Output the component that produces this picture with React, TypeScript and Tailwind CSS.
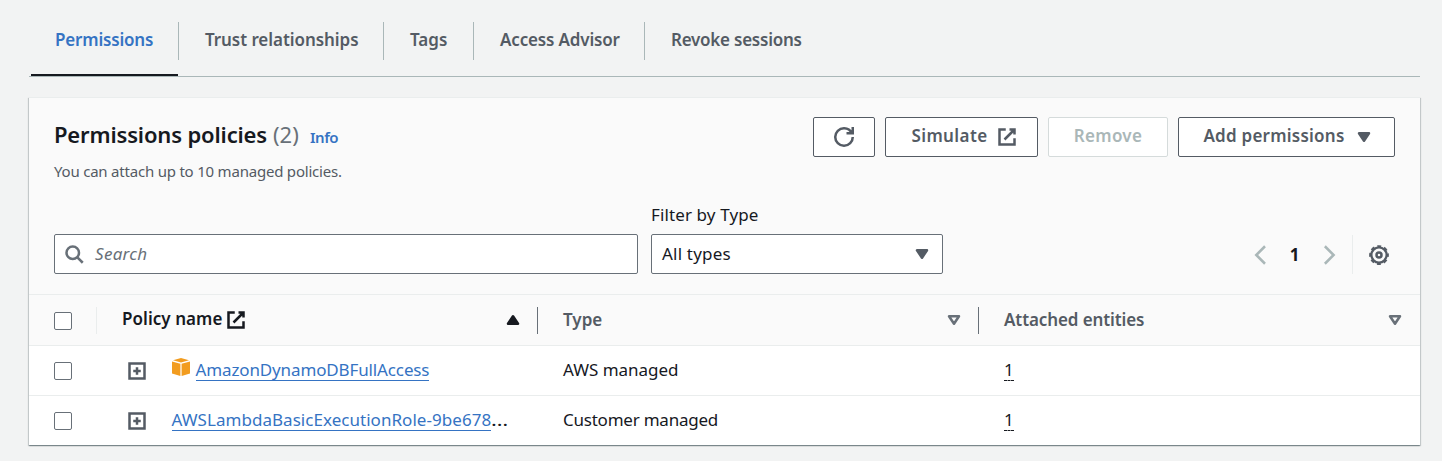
import type { ReactNode } from "react";

function Icon({ children, className = "" }: { children: ReactNode; className?: string }) {
  return (
    <svg
      viewBox="0 0 16 16"
      className={`h-5 w-5 shrink-0 ${className}`}
      fill="none"
      stroke="currentColor"
      strokeWidth="2"
    >
      {children}
    </svg>
  );
}

const External = ({ className = "" }: { className?: string }) => (
  <Icon className={className}>
    <path d="M10 2h4v4M6 10l8-8M14 9.05V14H2V2h5" />
  </Icon>
);

const Caret = ({ kind, className = "" }: { kind: "down" | "up" | "outline"; className?: string }) => (
  <Icon className={className}>
    <path
      d={kind === "up" ? "M12 11H4l4-6 4 6z" : "M4 5h8l-4 6-4-6z"}
      fill={kind === "outline" ? "none" : "currentColor"}
      strokeLinejoin="round"
    />
  </Icon>
);

const Checkbox = () => (
  <span className="block h-[18px] w-[18px] shrink-0 rounded-[2px] border border-[#687078] bg-white" />
);

const Expand = () => (
  <Icon className="text-[#545b64]">
    <path d="M2 2h12v12H2zM8 5v6M5 8h6" />
  </Icon>
);

const Cube = () => (
  <svg viewBox="0 0 18 18" className="h-[18px] w-[18px] shrink-0" fill="#f29c1f">
    <path d="M9 0L17 2.3 9 4.6 1 2.3z" />
    <path d="M0 3.4l8.4 2.4V18L0 15.6z" />
    <path d="M18 3.4L9.6 5.8V18L18 15.6z" />
  </svg>
);

const tabs = [
  { label: "Permissions", box: "w-[147px]", text: "tracking-[-0.18px] text-[#3573c3]" },
  { label: "Trust relationships", box: "w-[205px]", text: "tracking-[-0.06px] text-[#545b64]" },
  { label: "Tags", box: "w-[90px]", text: "text-[#545b64]" },
  { label: "Access Advisor", box: "w-[171px]", text: "tracking-[-0.16px] text-[#545b64]" },
  { label: "Revoke sessions", box: "w-[182px]", text: "tracking-[-0.24px] text-[#545b64]" },
];

const button =
  "flex h-10 shrink-0 items-center justify-center rounded-[2px] border bg-white font-semibold tracking-[0.28px]";

export default function App() {
  return (
    <div className="h-[461px] overflow-hidden whitespace-nowrap bg-[#f2f3f3] pl-[29px] font-['Noto_Sans',sans-serif] text-[17px] leading-6 text-[#16191f]">
      <div className="flex h-[77px] w-[1391px] border-b border-[#aab7b8] pl-[2px]">
        {tabs.map((tab, i) => (
          <div
            key={tab.label}
            className={`flex flex-col justify-between pt-[22px] ${tab.box} ${i === 0 ? "border-b-2 border-[#16191f]" : ""}`}
          >
            <div
              className={`flex h-[38px] items-center font-semibold ${i === 0 ? "pl-6" : "border-l border-[#aab7b8] pl-[26px]"}`}
            >
              <span className={`relative top-[-1px] ${tab.text}`}>{tab.label}</span>
            </div>
          </div>
        ))}
      </div>

      <section className="mt-5 h-[348px] w-[1391px] border-t border-[#eaeded] bg-white shadow-[0_1px_1px_0_rgba(0,28,36,0.3),1px_1px_1px_0_rgba(0,28,36,0.15),-1px_1px_1px_0_rgba(0,28,36,0.15)]">
        <div className="h-[197px] border-b border-[#eaeded] bg-[#fafafa] px-[25px] pt-[19px]">
          <div className="flex h-[77px] justify-between">
            <div>
              <div className="flex items-baseline leading-[35px]">
                <h2 className="w-[219px] text-[22px] font-semibold tracking-[-0.16px]">Permissions policies</h2>
                <span className="w-[37px] text-[22px] text-[#687078]">(2)</span>
                <span className="text-[15px] font-semibold tracking-[-0.45px] text-[#3573c3]">Info</span>
              </div>
              <p className="mt-[4px] text-[15px] tracking-[-0.21px] text-[#545b64]">
                You can attach up to 10 managed policies.
              </p>
            </div>
            <div className="flex gap-[10px] text-[#545b64]">
              <button className={`${button} w-[62px] border-[#545b64]`}>
                <Icon>
                  <path d="M10 5h5V0M15 8a6.957 6.957 0 0 1-7 7 6.957 6.957 0 0 1-7-7 6.957 6.957 0 0 1 7-7 6.87 6.87 0 0 1 6.3 4" />
                </Icon>
              </button>
              <button className={`${button} w-[153px] gap-[9px] border-[#545b64] pl-[5px]`}>
                <span className="relative top-[-1px] tracking-[0.4px]">Simulate</span>
                <External />
              </button>
              <button className={`${button} w-[120px] border-[#d5dbdb] text-[#aab7b8]`}>
                <span className="relative top-[-1px]">Remove</span>
              </button>
              <button className={`${button} w-[217px] gap-[9px] border-[#545b64] pl-[4px]`}>
                <span className="relative top-[-1px] tracking-[0.24px]">Add permissions</span>
                <Caret kind="down" />
              </button>
            </div>
          </div>

          <div className="mt-[9px] flex items-end">
            <div className="flex h-10 w-[584px] items-center gap-[11px] rounded-[2px] border border-[#687078] bg-white pl-[9px] text-[#687078]">
              <Icon>
                <circle cx="7" cy="7" r="5" />
                <path d="M15 15l-4.5-4.5" />
              </Icon>
              <span className="italic tracking-[0.3px]">Search</span>
            </div>
            <div className="ml-[13px] w-[292px]">
              <div className="mb-[7px] tracking-[0.12px]">Filter by Type</div>
              <div className="flex h-10 items-center justify-between rounded-[2px] border border-[#687078] bg-white pl-[10px] pr-[10px]">
                <span className="tracking-[0.2px]">All types</span>
                <Caret kind="down" className="text-[#545b64]" />
              </div>
            </div>
            <div className="ml-auto flex h-[39px] items-center text-[#aab7b8]">
              <Icon>
                <path d="M12 1L5 8l7 7" />
              </Icon>
              <span className="w-[49px] text-center text-[17px] font-bold text-[#16191f]">1</span>
              <Icon>
                <path d="M4.7 1l7 7-7 7" />
              </Icon>
              <div className="ml-[13px] h-[39px] w-px bg-[#eaeded]" />
              <Icon className="ml-4 mr-[6px] text-[#545b64]">
                <circle cx="8" cy="8" r="2" />
                <circle cx="8" cy="8" r="6.1" strokeWidth="1.8" />
                <circle
                  cx="8"
                  cy="8"
                  r="7.1"
                  strokeWidth="1.6"
                  strokeDasharray="3.1 2.476"
                  strokeDashoffset="1.55"
                />
              </Icon>
            </div>
          </div>
        </div>

        <div className="flex h-[51px] items-center border-b border-[#eaeded] bg-[#fafafa] pl-[25px] font-semibold text-[#545b64]">
          <div className="flex w-[42px] pt-px">
            <Checkbox />
          </div>
          <div className="flex h-[27px] w-[441px] items-center border-l border-[#eaeded] pl-[25px] text-[#16191f]">
            <span className="relative top-[-1px] tracking-[0.05px]">Policy name</span>
            <External className="ml-[4px]" />
            <Caret kind="up" className="ml-auto mr-[14px]" />
          </div>
          <div className="flex h-[27px] w-[441px] items-center justify-between border-l border-[#687078] pl-[25px] pr-[14px]">
            <span>Type</span>
            <Caret kind="outline" className="text-[#687078]" />
          </div>
          <div className="flex h-[27px] flex-1 items-center justify-between border-l border-[#687078] pl-[25px] pr-[15px]">
            <span className="tracking-[-0.1px]">Attached entities</span>
            <Caret kind="outline" className="text-[#687078]" />
          </div>
        </div>

        <div className="flex h-[50px] items-center border-b border-[#eaeded] pl-[25px]">
          <Checkbox />
          <div className="ml-[55px] flex w-[44.5px]">
            <Expand />
          </div>
          <div className="flex w-[391.5px] items-center">
            <div className="mb-[8px]">
              <Cube />
            </div>
            <a className="mb-[2px] ml-[6px] h-[22px] border-b border-[#3573c3] leading-[22px] tracking-[-0.13px] text-[#3573c3]">
              AmazonDynamoDBFullAccess
            </a>
          </div>
          <span className="mb-[2px] w-[441px] tracking-[-0.03px]">AWS managed</span>
          <span className="mb-[2px] h-[22px] border-b border-dashed border-[#16191f] leading-[22px]">1</span>
        </div>

        <div className="flex h-[49px] items-center pl-[25px]">
          <Checkbox />
          <div className="ml-[55px] flex w-[44.5px]">
            <Expand />
          </div>
          <div className="flex w-[391.5px] items-center">
            <a className="mb-[2px] h-[22px] border-b border-[#3573c3] leading-[22px] tracking-[0.04px] text-[#3573c3]">
              AWSLambdaBasicExecutionRole-9be678
            </a>
            <span className="mb-[2px] origin-left scale-x-[1.28]">…</span>
          </div>
          <span className="mb-[2px] w-[441px] tracking-[-0.23px]">Customer managed</span>
          <span className="mb-[2px] h-[22px] border-b border-dashed border-[#16191f] leading-[22px]">1</span>
        </div>
      </section>
    </div>
  );
}
